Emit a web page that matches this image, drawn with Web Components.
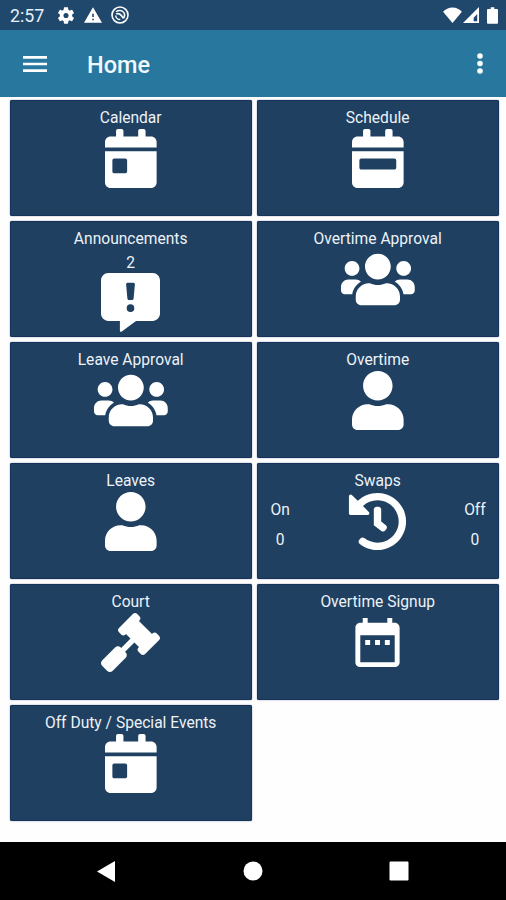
<!DOCTYPE html>
<html lang="en">
<head>
<meta charset="utf-8">
<title>Home</title>
<style>
html,body{margin:0;height:100%;background:#fefefe}
body{font-family:Roboto,"Liberation Sans",sans-serif;color:#fff}
</style>
</head>
<body>
<app-screen></app-screen>
<script>
const CAL = 'M0 464c0 26.5 21.5 48 48 48h352c26.5 0 48-21.5 48-48V192H0v272z';
const CAL_TOP = 'M400 64h-48V16c0-8.8-7.2-16-16-16h-32c-8.8 0-16 7.2-16 16v48H160V16c0-8.8-7.2-16-16-16h-32c-8.8 0-16 7.2-16 16v48H48C21.5 64 0 85.5 0 112v48h448v-48c0-26.5-21.5-48-48-48z';
const ICONS = {
  day: ['0 0 448 512', CAL + 'm64-192c0-8.8 7.2-16 16-16h96c8.8 0 16 7.2 16 16v96c0 8.8-7.2 16-16 16H80c-8.8 0-16-7.2-16-16v-96z' + CAL_TOP],
  week: ['0 0 448 512', CAL + 'm64-192c0-8.8 7.2-16 16-16h288c8.8 0 16 7.2 16 16v64c0 8.8-7.2 16-16 16H80c-8.8 0-16-7.2-16-16v-64z' + CAL_TOP],
  notice: ['0 0 512 512', 'M64 0h384c35.3 0 64 28.7 64 64v288c0 35.3-28.7 64-64 64H304L180 508c-8 6-16 2-16-8v-84H64c-35.3 0-64-28.7-64-64V64C0 28.7 28.7 0 64 0zM232 84c-9 0-15 7-14 16l11 122c1 8 6 13 13 13h28c7 0 12-5 13-13l11-122c1-9-5-16-14-16zM256 272a33 33 0 1 0 0 66 33 33 0 1 0 0-66z'],
  users: ['0 0 640 512', 'M96 224c35.3 0 64-28.7 64-64s-28.7-64-64-64-64 28.7-64 64 28.7 64 64 64zm448 0c35.3 0 64-28.7 64-64s-28.7-64-64-64-64 28.7-64 64 28.7 64 64 64zm32 32h-64c-17.6 0-33.5 7.1-45.1 18.6 40.3 22.1 68.9 62 75.1 109.4h66c17.7 0 32-14.3 32-32v-32c0-35.3-28.7-64-64-64zm-256 0c61.9 0 112-50.1 112-112S381.9 32 320 32 208 82.1 208 144s50.1 112 112 112zm76.8 32h-8.3c-20.8 10-43.9 16-68.5 16s-47.6-6-68.5-16h-8.3C179.6 288 128 339.6 128 403.2V432c0 26.5 21.5 48 48 48h288c26.5 0 48-21.5 48-48v-28.8c0-63.6-51.6-115.2-115.2-115.2zm-223.7-13.4C161.5 263.1 145.6 256 128 256H64c-35.3 0-64 28.7-64 64v32c0 17.7 14.3 32 32 32h65.9c6.3-47.4 34.9-87.3 75.2-109.4z'],
  user: ['0 0 448 512', 'M224 256c70.7 0 128-57.3 128-128S294.7 0 224 0 96 57.3 96 128s57.3 128 128 128zm89.6 32h-16.7c-22.2 10.2-46.9 16-72.9 16s-50.6-5.8-72.9-16h-16.7C60.2 288 0 348.2 0 422.4V464c0 26.5 21.5 48 48 48h352c26.5 0 48-21.5 48-48v-41.6c0-74.2-60.2-134.4-134.4-134.4z'],
  history: ['0 0 512 512', 'M504 255.531c.253 136.64-111.18 248.372-247.82 248.468-59.015.042-113.223-20.53-155.822-54.911-11.077-8.94-11.905-25.541-1.839-35.607l11.267-11.267c8.609-8.609 22.353-9.551 31.891-1.984C173.062 425.135 212.781 440 256 440c101.705 0 184-82.311 184-184 0-101.705-82.311-184-184-184-48.814 0-93.149 18.969-126.068 49.932l50.754 50.754c10.08 10.08 2.941 27.314-11.313 27.314H24c-8.837 0-16-7.163-16-16V38.627c0-14.254 17.234-21.393 27.314-11.314l49.372 49.372C129.209 34.136 189.552 8 256 8c136.81 0 247.747 110.78 248 247.531zm-180.912 78.784l9.823-12.63c8.138-10.463 6.253-25.542-4.21-33.679L288 256.349V152c0-13.255-10.745-24-24-24h-16c-13.255 0-24 10.745-24 24v135.651l65.409 50.874c10.463 8.137 25.541 6.253 33.679-4.21z'],
  gavel: ['0 0 512 512', 'M504.971 199.362l-22.627-22.627c-9.373-9.373-24.569-9.373-33.941 0l-5.657 5.657L329.608 69.255l5.657-5.657c9.373-9.373 9.373-24.569 0-33.941L312.638 7.029c-9.373-9.373-24.569-9.373-33.941 0L154.246 131.48c-9.373 9.373-9.373 24.569 0 33.941l22.627 22.627c9.373 9.373 24.569 9.373 33.941 0l5.657-5.657 39.598 39.598-81.04 81.04-5.657-5.657c-12.497-12.497-32.758-12.497-45.255 0L9.373 412.118c-12.497 12.497-12.497 32.758 0 45.255l45.255 45.255c12.497 12.497 32.758 12.497 45.255 0l114.745-114.745c12.497-12.497 12.497-32.758 0-45.255l-5.657-5.657 81.04-81.04 39.598 39.598-5.657 5.657c-9.373 9.373-9.373 24.569 0 33.941l22.627 22.627c9.373 9.373 24.569 9.373 33.941 0l124.451-124.451c9.372-9.372 9.372-24.568 0-33.941z'],
  range: ['0 0 24 24', 'M9 11H7v2h2v-2zm4 0h-2v2h2v-2zm4 0h-2v2h2v-2zm2-7h-1V2h-2v2H8V2H6v2H5c-1.11 0-1.99.9-1.99 2L3 20c0 1.1.89 2 2 2h14c1.1 0 2-.9 2-2V6c0-1.1-.9-2-2-2zm0 16H5V9h14v11z'],
  gear: ['2 2 20 20', 'M19.14 12.94c.04-.3.06-.61.06-.94 0-.32-.02-.64-.07-.94l2.03-1.58c.18-.14.23-.41.12-.61l-1.92-3.32c-.12-.22-.37-.29-.59-.22l-2.39.96c-.5-.38-1.03-.7-1.62-.94l-.36-2.54c-.04-.24-.24-.41-.48-.41h-3.84c-.24 0-.43.17-.47.41l-.36 2.54c-.59.24-1.13.57-1.62.94l-2.39-.96c-.22-.08-.47 0-.59.22L2.74 8.87c-.12.21-.08.47.12.61l2.03 1.58c-.05.3-.09.63-.09.94s.02.64.07.94l-2.03 1.58c-.18.14-.23.41-.12.61l1.92 3.32c.12.22.37.29.59.22l2.39-.96c.5.38 1.03.7 1.62.94l.36 2.54c.05.24.24.41.48.41h3.84c.24 0 .44-.17.47-.41l.36-2.54c.59-.24 1.13-.56 1.62-.94l2.39.96c.22.08.47 0 .59-.22l1.92-3.32c.12-.22.07-.47-.12-.61l-2.01-1.58zM12 15a3 3 0 1 1 0-6 3 3 0 0 1 0 6z'],
  warning: ['1 2 22 19', 'M1 21h22L12 2 1 21zm12-3h-2v-2h2v2zm0-4h-2v-4h2v4z'],
  wifi: ['0 0 20 17', 'M10 17L0 5C2.5 2.2 6 .5 10 .5S17.5 2.2 20 5z'],
  signal: ['0 0 18 18', 'M18 0v18H0zM16 8l-4 4v4h4z'],
  battery: ['0 0 12 18', 'M4 0h4v2h3a1 1 0 0 1 1 1v14a1 1 0 0 1-1 1H1a1 1 0 0 1-1-1V3a1 1 0 0 1 1-1h3z'],
  menu: ['0 0 24 16', 'M0 0h24v2.7H0zM0 6.65h24v2.7H0zM0 13.3h24V16H0z'],
  more: ['0 0 6 21', 'M3 .2a2.8 2.8 0 1 1 0 5.6 2.8 2.8 0 0 1 0-5.6zM3 7.7a2.8 2.8 0 1 1 0 5.6 2.8 2.8 0 0 1 0-5.6zM3 15.200a2.8 2.8 0 1 1 0 5.6 2.8 2.8 0 0 1 0-5.6z'],
  back: ['0 0 18 21', 'M18 0v21L0 10.5z'],
  home: ['0 0 20 20', 'M10 .5a9.5 9.5 0 1 1 0 19 9.5 9.5 0 0 1 0-19z'],
  recent: ['0 0 20 20', 'M1.5 .5h17a1 1 0 0 1 1 1v17a1 1 0 0 1-1 1h-17a1 1 0 0 1-1-1v-17a1 1 0 0 1 1-1z']
};
const define = (name, html) => customElements.define(name, class extends HTMLElement {
  constructor() {
    super();
    this.attachShadow({mode: 'open'}).innerHTML = html;
  }
});

customElements.define('ui-icon', class extends HTMLElement {
  connectedCallback() {
    const [box, path] = ICONS[this.getAttribute('name')];
    this.attachShadow({mode: 'open'}).innerHTML =
      `<style>:host{display:block;flex:none}svg{display:block;width:100%;height:100%}</style>
       <svg viewBox="${box}" fill="currentColor" fill-rule="evenodd"><path d="${path}"/></svg>`;
  }
});

define('blocked-icon', `<style>:host{display:block;width:18px;height:18px}svg{display:block}</style>
<svg width="18" height="18" viewBox="0 0 18 18" fill="none" stroke="currentColor"><circle cx="9" cy="9" r="8" stroke-width="1.6"/><path d="M5 5.800C7.500 3.900 11 4 12.900 6.700c1.200 2 .9 4-.3 5.700M4.700 9.500c.2 2.400 2.200 4.100 4.600 4" stroke-width="1.400"/><path d="M5.200 8.200c2-1.700 4.600-.2 7.200 4.200" stroke-width="1.700"/></svg>`);

define('status-bar', `<style>
:host{display:flex;align-items:center;height:30px;background:#20486d;padding:0 8px 0 10px;box-sizing:border-box}
time{font-size:17.800px;line-height:30px;width:47px;padding-top:1px;box-sizing:border-box;color:#e9f0f6}
.left{display:flex;align-items:center;gap:9px;flex:1}
.right{display:flex;align-items:center}
</style>
<time>2:57</time>
<div class="left"><ui-icon name="gear" style="width:18px;height:17px"></ui-icon><ui-icon name="warning" style="width:18px;height:16px"></ui-icon><blocked-icon></blocked-icon></div>
<div class="right"><ui-icon name="wifi" style="width:19px;height:16px;margin-right:1px"></ui-icon><ui-icon name="signal" style="width:16px;height:16px;margin-right:8px"></ui-icon><ui-icon name="battery" style="width:11px;height:17px"></ui-icon></div>`);

define('app-bar', `<style>
:host{display:flex;align-items:center;height:67px;background:#27779e;padding:0 23px 0 22.500px;box-sizing:border-box}
h1{margin:0;font-size:23.500px;line-height:30px;font-weight:500;flex:1;padding:2px 0 0 40.500px;color:#f2f9fc}
</style>
<ui-icon name="menu" style="width:24px;height:16px"></ui-icon><h1><slot></slot></h1><ui-icon name="more" style="width:6px;height:21px"></ui-icon>`);

define('menu-tile', `<style>
:host{display:grid;grid-template-columns:42px minmax(0,1fr) 42px;height:115.500px;box-sizing:border-box;padding:6px 2px 0;background:#1f4060;border-radius:2px;box-shadow:inset 0 0 0 1px #17335b,0 0 1.500px #747f9c;font-size:15.600px;line-height:24px;color:#edf2f8}
.main{display:flex;flex-direction:column;align-items:center;white-space:nowrap}
::slotted(ui-icon){height:59px;margin-top:-1.500px;color:#fff}
::slotted([slot]){display:flex;flex-direction:column;align-items:center;line-height:30px;padding-top:26px}
.left{padding-left:1px}
.right{grid-column:3;padding-right:1.500px}
</style>
<div class="left"><slot name="left"></slot></div><div class="main"><slot></slot></div><div class="right"><slot name="right"></slot></div>`);

define('nav-bar', `<style>
:host{display:flex;align-items:center;justify-content:space-between;height:58px;background:#000;padding:0 97px 0 96.500px;box-sizing:border-box}
</style>
<ui-icon name="back" style="width:18px;height:21px"></ui-icon><ui-icon name="home" style="width:20px;height:20px;padding-left:3px"></ui-icon><ui-icon name="recent" style="width:20px;height:20px"></ui-icon>`);

define('app-screen', `<style>
:host{display:flex;flex-direction:column;height:900px;width:506px;background:#fefefe}
main{flex:1;display:grid;grid-template-columns:242px 242px;gap:5.500px 5px;align-content:start;padding:3px 7px 0 9.700px}
.count{height:24px;margin-bottom:-1px}
</style>
<status-bar></status-bar>
<app-bar>Home</app-bar>
<main>
<menu-tile><span>Calendar</span><ui-icon name="day"></ui-icon></menu-tile>
<menu-tile><span>Schedule</span><ui-icon name="week"></ui-icon></menu-tile>
<menu-tile><span>Announcements</span><span class="count">2</span><ui-icon name="notice"></ui-icon></menu-tile>
<menu-tile><span>Overtime Approval</span><ui-icon name="users"></ui-icon></menu-tile>
<menu-tile><span>Leave Approval</span><ui-icon name="users"></ui-icon></menu-tile>
<menu-tile><span>Overtime</span><ui-icon name="user"></ui-icon></menu-tile>
<menu-tile><span>Leaves</span><ui-icon name="user"></ui-icon></menu-tile>
<menu-tile><div slot="left"><span>On</span><span>0</span></div><span>Swaps</span><ui-icon name="history"></ui-icon><div slot="right"><span>Off</span><span>0</span></div></menu-tile>
<menu-tile><span>Court</span><ui-icon name="gavel"></ui-icon></menu-tile>
<menu-tile><span>Overtime Signup</span><ui-icon name="range"></ui-icon></menu-tile>
<menu-tile><span>Off Duty / Special Events</span><ui-icon name="day"></ui-icon></menu-tile>
</main>
<nav-bar></nav-bar>`);
</script>
</body>
</html>
